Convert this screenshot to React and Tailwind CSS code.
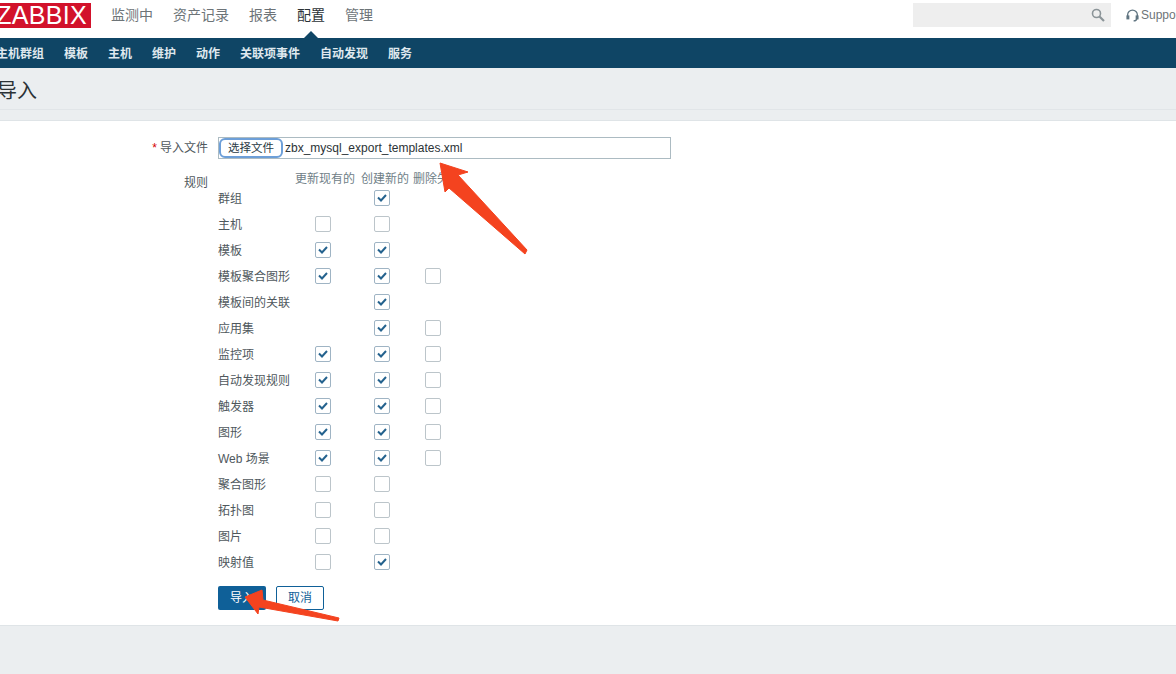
import React from 'react';

const font = { cjk: "font-['Liberation_Sans','Noto_Sans_CJK_SC',sans-serif]" };

const topMenu = [
  { label: '监测中', width: 'w-[62px]' },
  { label: '资产记录', width: 'w-[76px]' },
  { label: '报表', width: 'w-[48px]' },
  { label: '配置', width: 'w-[48px]', active: true },
  { label: '管理', width: 'w-[48px]' },
];

const subMenu = ['主机群组', '模板', '主机', '维护', '动作', '关联项事件', '自动发现', '服务'];

const rules = [
  { name: '群组', a: null, b: true, c: null },
  { name: '主机', a: false, b: false, c: null },
  { name: '模板', a: true, b: true, c: null },
  { name: '模板聚合图形', a: true, b: true, c: false },
  { name: '模板间的关联', a: null, b: true, c: null },
  { name: '应用集', a: null, b: true, c: false },
  { name: '监控项', a: true, b: true, c: false },
  { name: '自动发现规则', a: true, b: true, c: false },
  { name: '触发器', a: true, b: true, c: false },
  { name: '图形', a: true, b: true, c: false },
  { name: 'Web 场景', a: true, b: true, c: false },
  { name: '聚合图形', a: false, b: false, c: null },
  { name: '拓扑图', a: false, b: false, c: null },
  { name: '图片', a: false, b: false, c: null },
  { name: '映射值', a: false, b: true, c: null },
];

const Check = ({ value }) => {
  if (value === null) return <span className="block w-4 h-4" />;
  return (
    <span className={`flex items-center justify-center w-4 h-4 bg-white border rounded-[2px] box-border ${value ? 'border-[#9fb4c4]' : 'border-[#bcc5ca]'}`}>
      {value && (
        <svg width="12" height="10" viewBox="0 0 12 10" fill="none">
          <path d="M2 4.500l3 3 5-5.500" stroke="#24628e" strokeWidth="2" />
        </svg>
      )}
    </span>
  );
};

const App = () => {
  return (
    <div className={`relative w-[1176px] h-[674px] overflow-hidden bg-white ${font.cjk}`}>
      {/* top menu */}
      <header className="h-[38px] flex items-start">
        <div className="ml-[-8px] mt-[3px] w-[99px] h-[25px] bg-[#d2122b] text-white text-[25px] leading-[25px] text-center tracking-[0.3px] font-['Liberation_Sans',sans-serif]">
          ZABBIX
        </div>
        <nav className="ml-[20px] flex h-[38px]">
          {topMenu.map((item) => (
            <a
              key={item.label}
              className={`${item.width} relative text-[14px] leading-[30px] whitespace-nowrap ${item.active ? 'text-[#2b3236]' : 'text-[#6d7478]'}`}
            >
              {item.label}
              {item.active && (
                <span className="absolute left-[7px] bottom-0 w-0 h-0 border-x-[7px] border-x-transparent border-b-[7px] border-b-[#0f4565]" />
              )}
            </a>
          ))}
        </nav>
        <div className="ml-auto flex items-start">
          <div className="mt-[3px] w-[198px] h-[24px] bg-[#eeeeee] flex items-center justify-end pr-[6px]">
            <svg width="14" height="14" viewBox="0 0 14 14" fill="none" stroke="#8b9498" strokeWidth="1.6">
              <circle cx="5.5" cy="5.5" r="4" />
              <path d="M8.5 8.5l4.5 4.5" strokeWidth="2.2" />
            </svg>
          </div>
          <div className="ml-[15px] w-[50px] flex items-center gap-[2px] mt-[7px] text-[12px] leading-[16px] text-[#6d7478] whitespace-nowrap">
            <svg className="shrink-0" width="13" height="13" viewBox="0 0 12 12" fill="none" stroke="#5f7480" strokeWidth="1.2">
              <path d="M1.5 8V5.5a4.5 4.5 0 0 1 9 0V8" />
              <path d="M10 8.5c0 1.500-1.500 2.500-3 2.500" />
              <rect x="1" y="6.500" width="1.500" height="2.500" fill="#5f7480" />
              <rect x="9.500" y="6.500" width="1.500" height="2.500" fill="#5f7480" />
            </svg>
            Support
          </div>
        </div>
      </header>

      {/* sub menu */}
      <nav className="h-[30px] bg-[#0f4565] flex items-center">
        <div className="flex gap-[20px] ml-[-4px] mt-[1px] text-[#dfe8ee] text-[12px] font-bold leading-[28px]">
          {subMenu.map((item) => (
            <a key={item}>{item}</a>
          ))}
        </div>
      </nav>

      {/* title */}
      <div className="h-[42px] bg-[#ebeef0] border-b border-[#e1e5e8] box-border">
        <h1 className="ml-[-3px] text-[20px] leading-[47px] text-[#2b3236]">导入</h1>
      </div>
      <div className="h-[11px] bg-[#ebeef0] border-b border-[#dfe4e7] box-border" />

      {/* form */}
      <main className="h-[505px] border-b border-[#dfe4e7] box-border pt-[16px] text-[12px] text-[#2b3236]">
        <div className="flex h-[22px]">
          <label className="w-[208px] text-right leading-[22px] text-[#4f585d]">
            <span className="text-[#d40000] mr-[3px]">*</span>导入文件
          </label>
          <div className="ml-[10px] w-[453px] h-[22px] border border-[#acbbc2] box-border flex items-center">
            <span className="w-[64px] h-[20px] border-2 border-[#6d9fd8] rounded-[6px] bg-white box-border text-center text-[11.5px] leading-[16px] text-[#2a3a44]">
              选择文件
            </span>
            <span className="ml-[2px] text-[12px] text-[#2b3236]">zbx_mysql_export_templates.xml</span>
          </div>
        </div>

        <div className="flex mt-[13px]">
          <label className="w-[208px] text-right pt-[3px] leading-[16px] text-[#4f585d]">规则</label>
          <div className="ml-[10px]">
            <div className="h-[13px] leading-[15px] pl-[77px] text-[#6f8087] whitespace-nowrap flex">
              <span className="w-[66px]">更新现有的</span>
              <span className="w-[52px]">创建新的</span>
              <span className="w-[30px] overflow-hidden">删除失败</span>
            </div>
            {rules.map((rule) => (
              <div key={rule.name} className="h-[26px] flex items-center">
                <span className="w-[97px] pt-[2px] text-[#4f585d] whitespace-nowrap">{rule.name}</span>
                <span className="w-[59px]"><Check value={rule.a} /></span>
                <span className="w-[51px]"><Check value={rule.b} /></span>
                <Check value={rule.c} />
              </div>
            ))}
            <div className="flex gap-[10px] mt-[11px]">
              <button className="w-[48px] h-[24px] bg-[#0f6098] text-white text-[12px] rounded-[2px]">导入</button>
              <button className="w-[48px] h-[24px] bg-white border border-[#0f6098] text-[#0f6098] text-[12px] rounded-[2px] box-border">取消</button>
            </div>
          </div>
        </div>
      </main>

      <footer className="h-[48px] bg-[#ebeef0]" />

      {/* red annotation arrows over the screenshot */}
      <svg className="absolute left-0 top-0 pointer-events-none" width="1176" height="674" viewBox="0 0 1176 674">
        <path d="M440 163 L468 172 L458 175 L527 250 L525 254 L449 188 L445 192 Z" fill="#f4431f" stroke="#f4431f" strokeLinejoin="round" />
        <path d="M245 597 L262 590 L263 600 L339 618 L338 621 L259 607 L258 614 Z" fill="#f4431f" stroke="#f4431f" strokeLinejoin="round" />
      </svg>
    </div>
  );
};

export default App;
